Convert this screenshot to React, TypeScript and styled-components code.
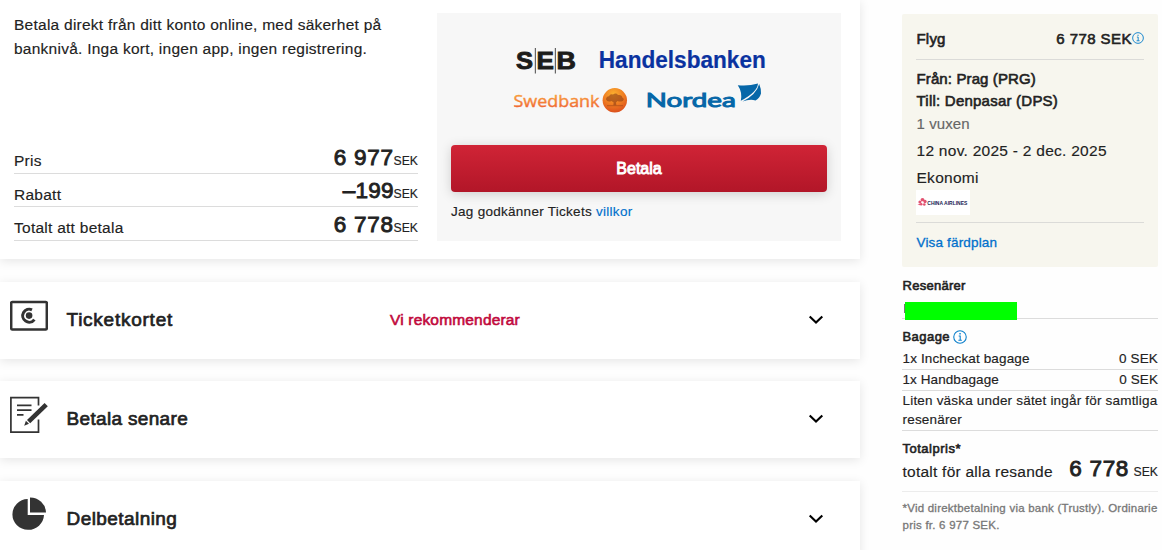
import React from "react";
import styled, { createGlobalStyle } from "styled-components";

const GlobalStyle = createGlobalStyle`
  * { box-sizing: border-box; }
  body {
    margin: 0;
    background: #fefefe;
    color: #222;
    font-family: "Liberation Sans", Arial, sans-serif;
    font-size: 15.5px;
    overflow: hidden;
    -webkit-text-stroke: 0.15px currentColor;
  }
`;

const Page = styled.div`
  display: flex;
  align-items: flex-start;
  width: 1162px;
  height: 550px;
  overflow: hidden;
`;

const Main = styled.main`
  width: 860px;
  flex: none;
`;

const cardShadow = "0 2px 10px rgba(0, 0, 0, 0.1)";

const PaymentPanel = styled.section`
  display: flex;
  height: 259px;
  padding: 13px 19px 0 14px;
  background: #fff;
  box-shadow: ${cardShadow};
`;

const PaymentInfo = styled.div`
  width: 404px;
  margin-right: 19px;
  display: flex;
  flex-direction: column;
`;

const Lead = styled.p`
  margin: 0 0 85px;
  line-height: 24px;
  letter-spacing: 0.25px;
  white-space: nowrap;
`;

const PriceRow = styled.div<{ $height: number }>`
  display: flex;
  justify-content: space-between;
  align-items: flex-end;
  height: ${(p) => p.$height}px;
  border-bottom: 1px solid #dcdcdc;
  line-height: 24px;
  letter-spacing: 0.26px;
`;

const PriceLabel = styled.span<{ $drop?: number }>`
  line-height: 24px;
  height: 24px;
  margin-bottom: ${(p) => -(p.$drop ?? 0)}px;
`;

const PriceValue = styled.span`
  line-height: 30px;
  height: 30px;
  white-space: nowrap;
`;

const Amount = styled.span<{ $spacing?: number }>`
  font-size: 22.5px;
  letter-spacing: ${(p) => p.$spacing ?? 0.7}px;
  -webkit-text-stroke: 0.9px #222;
`;

const Currency = styled.span`
  font-size: 12.2px;
  letter-spacing: 0;
`;

const BankBox = styled.div`
  width: 404px;
  height: 228px;
  padding: 27px 14px 0;
  background: #f7f7f7;
`;

const BankLogos = styled.svg`
  display: block;
  margin: 0 0 29px 59px;
`;

const PayButton = styled.button`
  display: block;
  width: 376px;
  height: 47px;
  padding: 1px 0 0;
  border: 0;
  border-radius: 4px;
  background: linear-gradient(#d02436, #b21628);
  box-shadow: 0 2px 12px rgba(0, 0, 0, 0.17);
  color: #fff;
  font: 16px "Liberation Sans", Arial, sans-serif;
  -webkit-text-stroke: 0.9px #fff;
`;

const Terms = styled.p`
  margin: 10px 0 0;
  font-size: 13.5px;
  line-height: 20px;
  letter-spacing: 0.28px;
`;

const Link = styled.a`
  color: #0070cc;
`;

const MethodCard = styled.section<{ $gap: number }>`
  display: flex;
  align-items: center;
  height: 77px;
  margin-top: ${(p) => p.$gap}px;
  padding: 0 36px 2px 10px;
  background: #fff;
  box-shadow: ${cardShadow};
`;

const MethodIcon = styled.svg`
  flex: none;
  width: 38px;
  height: 38px;
  margin: 0 18.5px 7px 0;
`;

const MethodTitle = styled.h2<{ $spacing: number }>`
  margin: 0;
  width: 323.5px;
  font-size: 19px;
  font-weight: 400;
  line-height: 24px;
  letter-spacing: ${(p) => p.$spacing}px;
  -webkit-text-stroke: 0.7px #222;
`;

const Recommended = styled.span`
  color: #c1093c;
  letter-spacing: 0.17px;
  -webkit-text-stroke: 0.6px #c1093c;
`;

const Chevron = styled.svg`
  margin-left: auto;
`;

const Sidebar = styled.aside`
  width: 256px;
  margin: 14px 0 0 42px;
`;

const TripCard = styled.section`
  height: 253px;
  padding: 12px 14px 0;
  border-radius: 2px;
  background: #f7f6ee;
`;

const TripHeader = styled.div`
  display: flex;
  align-items: center;
  height: 34px;
  padding: 0 0 9px 0.5px;
  border-bottom: 1px solid #dbdbd8;
  font-size: 15px;
  letter-spacing: 0.2px;
  -webkit-text-stroke: 0.6px #222;
`;

const TripPrice = styled.span`
  margin-left: auto;
  letter-spacing: 0.45px;
`;

const TripLine = styled.div<{ $height: number; $spacing?: number; $strong?: boolean; $muted?: boolean }>`
  height: ${(p) => p.$height}px;
  line-height: ${(p) => p.$height}px;
  font-size: ${(p) => (p.$strong || p.$muted ? 15 : 15.5)}px;
  letter-spacing: ${(p) => p.$spacing ?? 0.27}px;
  color: ${(p) => (p.$muted ? "#666" : "#222")};
  -webkit-text-stroke: ${(p) => (p.$strong ? "0.6px #222" : "0.15px currentColor")};
`;

const TripRoute = styled.div`
  padding: 8px 0 0 0.5px;
`;

const AirlineBadge = styled.div`
  width: 54px;
  height: 25px;
  background: #fff;
`;

const AirlineLogo = styled.svg`
  display: block;
  overflow: visible;
`;

const ItineraryLink = styled.div`
  margin-top: 7px;
  border-top: 1px solid #dbdbd8;
  padding: 10px 0 0 0.5px;
  color: #0070cc;
  font-size: 13.5px;
  line-height: 20px;
  letter-spacing: 0.16px;
  -webkit-text-stroke: 0.3px #0070cc;
`;

const SideHeading = styled.h3<{ $top: number; $spacing: number }>`
  display: flex;
  align-items: center;
  gap: 3px;
  height: 18px;
  margin: ${(p) => p.$top}px 0 0;
  padding-left: 0.5px;
  font-size: 13px;
  font-weight: 400;
  line-height: 18px;
  letter-spacing: ${(p) => p.$spacing}px;
  -webkit-text-stroke: 0.6px #222;
`;

const Traveller = styled.div`
  height: 24px;
  padding: 7px 0 0 2.5px;
  border-bottom: 1px solid #dcdcdc;
`;

const Redaction = styled.div`
  width: 112px;
  height: 18px;
  background: #00ff00;
  position: relative;

  &::before {
    content: "";
    position: absolute;
    left: -1px;
    top: 2px;
    width: 1px;
    height: 9px;
    background: #777;
  }
`;

const BagRow = styled.div<{ $height: number; $top?: number; $spacing?: number }>`
  display: flex;
  justify-content: space-between;
  height: ${(p) => p.$height}px;
  padding: ${(p) => p.$top ?? 0}px 0 0 0.5px;
  border-bottom: 1px solid #dcdcdc;
  font-size: 13.5px;
  line-height: 19px;
  letter-spacing: ${(p) => p.$spacing ?? 0.13}px;
  white-space: nowrap;
`;

const TotalRow = styled.div`
  display: flex;
  justify-content: space-between;
  height: 34px;
  padding-left: 0.5px;
  border-bottom: 1px solid #ececec;
  letter-spacing: 0.24px;
  line-height: 28px;
  white-space: nowrap;
`;

const TotalValue = styled.span`
  line-height: 21px;
`;

const FootNote = styled.p`
  margin: 8px 0 0;
  padding-left: 0.5px;
  color: #777;
  font-size: 11.5px;
  line-height: 17px;
  letter-spacing: 0.23px;
  white-space: nowrap;
  -webkit-text-stroke: 0.3px #777;
`;

const InfoIcon = ({ size }: { size: number }) => (
  <svg width={size} height={size} viewBox="0 0 13 13" fill="none" stroke="#0a7fcb" strokeWidth="1">
    <circle cx="6.5" cy="6.5" r="5.8" />
    <path d="M5.3 5.5H6.7V9.4M5 9.5H8.2" />
    <path d="M5.9 3.5H7.2" strokeWidth="1.3" />
  </svg>
);

const DownChevron = () => (
  <Chevron width="16" height="10" viewBox="0 0 16 10" fill="none" stroke="#000" strokeWidth="2.1">
    <path d="M1.7 1.5L8 7.6L14.3 1.5" />
  </Chevron>
);

const CardIcon = () => (
  <MethodIcon viewBox="0 0 38 38">
    <rect x="1.2" y="4.9" width="35.6" height="27.6" rx="1" fill="none" stroke="#333" strokeWidth="2.5" />
    <path d="M22 12.8A6.5 6.5 0 1 0 24.4 22.6" fill="none" stroke="#333" strokeWidth="3" />
    <circle cx="19.1" cy="18.6" r="3.3" fill="#333" />
  </MethodIcon>
);

const NoteIcon = () => (
  <MethodIcon viewBox="0 0 38 38" fill="none" stroke="#333">
    <path d="M28.5 9.5V1.7H.9V36.1H28.5V23.5" strokeWidth="1.7" />
    <path d="M7 9.3H21.5M7 14.1H21.5M7 18.8H13.5" strokeWidth="1.8" />
    <path d="M18.6 25.6L36.2 8.6" strokeWidth="4.6" />
    <path d="M15.9 24.8L19 27.7L14.2 29.8Z" fill="#333" stroke="none" />
  </MethodIcon>
);

const PieIcon = () => (
  <MethodIcon viewBox="0 0 38 38" fill="#333">
    <path d="M17.7 3A15.8 15.4 0 1 0 34 19.1H17.7Z" />
    <path d="M20 1.4A16 15.7 0 0 1 36 16.6H20Z" />
  </MethodIcon>
);

const Banks = () => (
  <BankLogos width="260" height="76" viewBox="0 0 260 76">
    <defs>
      <linearGradient id="swed" x1="0" y1="0" x2="0" y2="1">
        <stop offset="0.2" stopColor="#f9a53c" />
        <stop offset="0.8" stopColor="#f06a33" />
      </linearGradient>
      <radialGradient id="ball" cx="0.45" cy="0.25" r="0.8">
        <stop offset="0" stopColor="#fbb02f" />
        <stop offset="0.5" stopColor="#f07f22" />
        <stop offset="1" stopColor="#d94a1c" />
      </radialGradient>
    </defs>
    <g fill="#1c1c1a" stroke="#1c1c1a" strokeWidth="0.9" fontFamily="Liberation Sans, Arial, sans-serif" fontWeight="700" fontSize="24">
      <text x="6" y="29.3" textLength="17" lengthAdjust="spacingAndGlyphs">S</text>
      <text x="26.6" y="29.3" textLength="17.4" lengthAdjust="spacingAndGlyphs">E</text>
      <text x="46.6" y="29.3" textLength="19.4" lengthAdjust="spacingAndGlyphs">B</text>
    </g>
    <path d="M25.4 8V33.5M45.4 8V33.5" stroke="#666" strokeWidth="1.2" />
    <text x="88.8" y="28" fill="#0a32a0" stroke="#0a32a0" strokeWidth="0.2" fontFamily="Liberation Sans, Arial, sans-serif" fontWeight="700" fontSize="23.3" textLength="167" lengthAdjust="spacingAndGlyphs">Handelsbanken</text>
    <text x="3.5" y="66.8" fill="url(#swed)" stroke="url(#swed)" strokeWidth="0.4" fontFamily="Open Sans, sans-serif" fontWeight="500" fontSize="17.2" textLength="86" lengthAdjust="spacingAndGlyphs">Swedbank</text>
    <circle cx="104.8" cy="60.3" r="12.2" fill="url(#ball)" />
    <g fill="#8f3d16">
      <path d="M96 59.5Q96 56.5 99 56.3Q100 53.5 103 54.5Q106 52.5 108 55Q112 54.5 112.3 57.5Q115 59 112.8 61Q110 62.2 107.5 61L106 62.5L106.3 65.3H103.3L103.7 62.5L101.5 61Q97.5 62.6 96 59.5Z" opacity="0.6" />
      <path d="M97 65.2H113V66.2H97Z" opacity="0.5" />
    </g>
    <text x="135.7" y="66.8" fill="#0667a8" stroke="#0667a8" strokeWidth="1" fontFamily="Lato, sans-serif" fontWeight="400" fontSize="20" textLength="90" lengthAdjust="spacingAndGlyphs">Nordea</text>
    <path d="M227.8 45.2Q238 46.5 248 43.5Q247.5 52 230.8 60.8Q232.5 52 227.8 45.2Z" fill="#0667a8" />
    <path d="M249.2 44Q251.5 49.5 251 53.5Q249.5 58.5 245.5 60.4Q239.5 58.8 232.5 61.6Q246.5 54.5 249.2 44Z" fill="#0667a8" />
  </BankLogos>
);

const ChinaAirlines = () => (
  <AirlineLogo width="54" height="25" viewBox="0 0 54 25">
    <g fill="#e25270">
      <circle cx="6.5" cy="9.8" r="1.9" />
      <circle cx="3.9" cy="12" r="1.5" />
      <circle cx="9" cy="11.5" r="1.7" />
      <circle cx="5.2" cy="14.3" r="1.3" />
      <circle cx="8.3" cy="14.5" r="1.3" />
      <path d="M1.5 14.8L4 13.8L4.2 15.2Z" />
    </g>
    <circle cx="6.6" cy="12.2" r="0.9" fill="#fff" />
    <text x="11.3" y="14.9" fill="#18214f" fontFamily="Liberation Sans, Arial, sans-serif" fontWeight="700" fontSize="5.4" textLength="40" lengthAdjust="spacingAndGlyphs">CHINA AIRLINES</text>
  </AirlineLogo>
);

export default function App() {
  return (
    <>
      <GlobalStyle />
      <Page>
        <Main>
          <PaymentPanel>
            <PaymentInfo>
              <Lead>
                Betala direkt från ditt konto online, med säkerhet på
                <br />
                banknivå. Inga kort, ingen app, ingen registrering.
              </Lead>
              <PriceRow $height={28}>
                <PriceLabel>Pris</PriceLabel>
                <PriceValue><Amount>6 977</Amount><Currency>SEK</Currency></PriceValue>
              </PriceRow>
              <PriceRow $height={33}>
                <PriceLabel $drop={1}>Rabatt</PriceLabel>
                <PriceValue><Amount $spacing={0.2}>–199</Amount><Currency>SEK</Currency></PriceValue>
              </PriceRow>
              <PriceRow $height={34}>
                <PriceLabel>Totalt att betala</PriceLabel>
                <PriceValue><Amount>6 778</Amount><Currency>SEK</Currency></PriceValue>
              </PriceRow>
            </PaymentInfo>
            <BankBox>
              <Banks />
              <PayButton>Betala</PayButton>
              <Terms>Jag godkänner Tickets <Link>villkor</Link></Terms>
            </BankBox>
          </PaymentPanel>

          <MethodCard $gap={23}>
            <CardIcon />
            <MethodTitle $spacing={0.75}>Ticketkortet</MethodTitle>
            <Recommended>Vi rekommenderar</Recommended>
            <DownChevron />
          </MethodCard>
          <MethodCard $gap={22}>
            <NoteIcon />
            <MethodTitle $spacing={0.33}>Betala senare</MethodTitle>
            <DownChevron />
          </MethodCard>
          <MethodCard $gap={23}>
            <PieIcon />
            <MethodTitle $spacing={0.43}>Delbetalning</MethodTitle>
            <DownChevron />
          </MethodCard>
        </Main>

        <Sidebar>
          <TripCard>
            <TripHeader>
              <span>Flyg</span>
              <TripPrice>6 778 SEK</TripPrice>
              <InfoIcon size={12} />
            </TripHeader>
            <TripRoute>
              <TripLine $height={22} $spacing={0.12} $strong>Från: Prag (PRG)</TripLine>
              <TripLine $height={22} $spacing={0.23} $strong>Till: Denpasar (DPS)</TripLine>
              <TripLine $height={24} $spacing={0.1} $muted>1 vuxen</TripLine>
              <TripLine $height={30}>12 nov. 2025 - 2 dec. 2025</TripLine>
              <TripLine $height={24}>Ekonomi</TripLine>
            </TripRoute>
            <AirlineBadge><ChinaAirlines /></AirlineBadge>
            <ItineraryLink>Visa färdplan</ItineraryLink>
          </TripCard>

          <SideHeading $top={10} $spacing={0.28}>Resenärer</SideHeading>
          <Traveller><Redaction /></Traveller>
          <SideHeading $top={9} $spacing={0.45}>Bagage<InfoIcon size={14} /></SideHeading>
          <BagRow $height={24} $top={3}><span>1x Incheckat bagage</span><span>0 SEK</span></BagRow>
          <BagRow $height={21} $spacing={0.08}><span>1x Handbagage</span><span>0 SEK</span></BagRow>
          <BagRow $height={40} $spacing={0.19}>
            <span>Liten väska under sätet ingår för samtliga<br />resenärer</span>
          </BagRow>
          <SideHeading $top={9} $spacing={0.5}>Totalpris*</SideHeading>
          <TotalRow>
            <span>totalt för alla resande</span>
            <TotalValue><Amount>6 778</Amount> <Currency>SEK</Currency></TotalValue>
          </TotalRow>
          <FootNote>
            *Vid direktbetalning via bank (Trustly). Ordinarie
            <br />
            pris fr. 6 977 SEK.
          </FootNote>
        </Sidebar>
      </Page>
    </>
  );
}
